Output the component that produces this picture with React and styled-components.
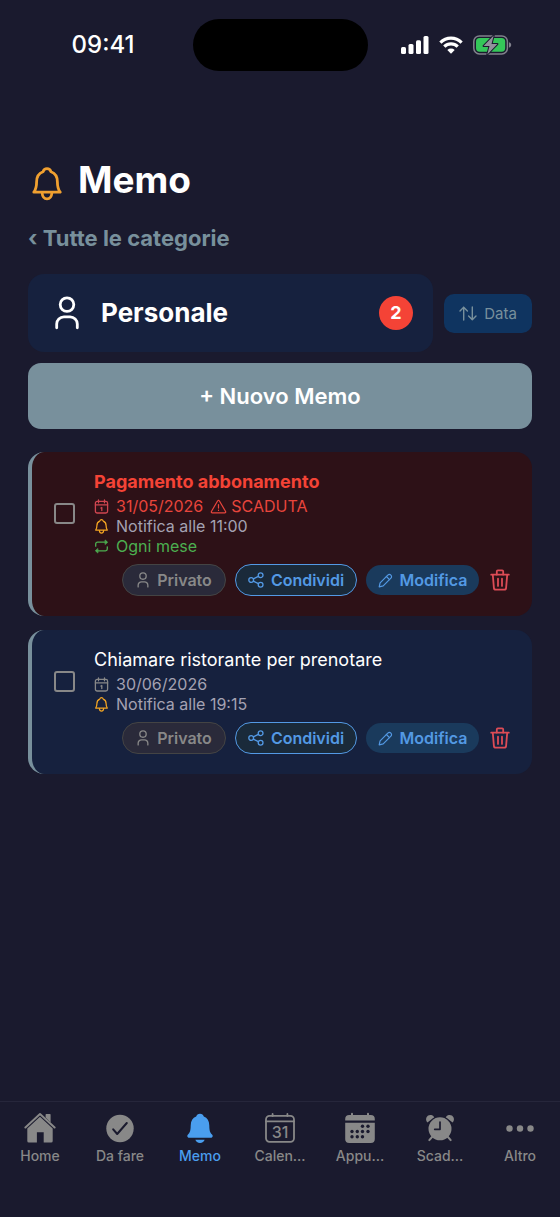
import React from "react";
import styled, { createGlobalStyle, css } from "styled-components";

const GlobalStyle = createGlobalStyle`
  *, *::before, *::after { box-sizing: border-box; }
  body {
    margin: 0;
    background: #1a1a2e;
    color: #fff;
    font-family: Inter, "Liberation Sans", sans-serif;
    -webkit-font-smoothing: antialiased;
  }
  button { font: inherit; border: 0; margin: 0; cursor: pointer; }
  svg { display: block; flex: none; }
`;

/* ---------- icons ---------- */

const Line = ({ w, h, box, stroke = 2, children }) => (
  <svg
    width={w}
    height={h}
    viewBox={box}
    fill="none"
    stroke="currentColor"
    strokeWidth={stroke}
    strokeLinecap="round"
    strokeLinejoin="round"
    aria-hidden="true"
  >
    {children}
  </svg>
);

const BellIcon = ({ w, h }) => (
  <Line w={w} h={h} box="0 0 30 34" stroke={2.8}>
    <path d="M1.800 25.200C3.800 22.600 4.600 20 4.600 15C4.600 9.600 7 6.200 11 4.800C11.600 2.800 13 1.600 15 1.600s3.400 1.200 4 3.200C23 6.200 25.400 9.600 25.400 15C25.400 20 26.200 22.600 28.200 25.200Z" />
    <path d="M10.200 26.500C10.500 30 12.200 31.800 15 31.800s4.500-1.800 4.800-5.300" />
  </Line>
);

const PersonIcon = ({ w, h }) => (
  <Line w={w} h={h} box="0 0 24 34" stroke={2.8}>
    <circle cx="12" cy="8.600" r="6.800" />
    <path d="M1.700 31.800V28a7.200 7.200 0 0 1 7.200-7.200h6.200a7.200 7.200 0 0 1 7.200 7.200v3.800" />
  </Line>
);

const SortIcon = () => (
  <Line w={18} h={15} box="0 0 18 15" stroke={1.4}>
    <path d="M4.700 14V1.200M1 5l3.700-3.800L8.400 5" />
    <path d="M13.300 1v12.800M9.600 10l3.700 3.800L17 10" />
  </Line>
);

const CalendarSmallIcon = () => (
  <Line w={15} h={15} box="0 0 15 15" stroke={1.3}>
    <rect x="1.400" y="2.400" width="12.200" height="11.600" rx="1.800" />
    <path d="M1.400 5.900h12.200M4.500 1v2.800M10.500 1v2.800M6.900 9l.9-.5v3" />
  </Line>
);

const WarningIcon = () => (
  <Line w={17} h={15} box="0 0 17 15" stroke={1.2}>
    <path d="M7.700 1.800a.9.900 0 0 1 1.600 0l6.300 10.700a.9.900 0 0 1-.8 1.300H2.200a.9.900 0 0 1-.8-1.300z" />
    <path d="M8.500 5.500v3.600M8.500 11.200v.2" />
  </Line>
);

const RepeatIcon = () => (
  <Line w={15} h={15} box="0 0 15 15" stroke={1.3}>
    <path d="M1.700 7.200V5a1.800 1.800 0 0 1 1.800-1.800h9" />
    <path d="M13.300 7.800V10a1.800 1.800 0 0 1-1.800 1.800h-9" />
    <path d="M11.400 1.200l2.200 2-2.200 2zM3.600 9.800l-2.200 2 2.200 2z" fill="currentColor" strokeWidth="0.8" />
  </Line>
);

const ShareIcon = () => (
  <Line w={16} h={16} box="0 0 16 16" stroke={1.3}>
    <circle cx="3.200" cy="8" r="2.400" />
    <circle cx="12.600" cy="3.200" r="2.400" />
    <circle cx="12.600" cy="12.800" r="2.400" />
    <path d="M5.400 6.900l5-2.600M5.400 9.100l5 2.600" />
  </Line>
);

const PencilIcon = () => (
  <Line w={15} h={15} box="0 0 15 15" stroke={1.2}>
    <path d="M1.200 13.800l.9-4L9.800 2.100a2.100 2.100 0 0 1 3.100 3.100L5.200 12.900z" />
    <path d="M8.400 3.500l3.100 3.100" />
  </Line>
);

const TrashIcon = () => (
  <Line w={20} h={22} box="0 0 20 22" stroke={1.8}>
    <path d="M1.200 5.700h17.600" />
    <path d="M6.800 5.500V2.400a1 1 0 0 1 1-1h4.400a1 1 0 0 1 1 1v3.100" />
    <path d="M2.800 5.900l1.100 13a1.900 1.900 0 0 0 1.900 1.800h8.400a1.900 1.900 0 0 0 1.900-1.800l1.100-13" />
    <path d="M8 9.700v7.200M12 9.700v7.200" />
  </Line>
);

const HomeIcon = () => (
  <svg width="32" height="32" viewBox="0 0 32 32" fill="currentColor" aria-hidden="true">
    <path d="M1.400 15.500L16 2l14.600 13.500" fill="none" stroke="currentColor" strokeWidth="2" strokeLinecap="round" strokeLinejoin="round" />
    <path d="M21.600 5.600V2.600a.7.700 0 0 1 .7-.7h3.600a.7.700 0 0 1 .7.700v7.800z" />
    <path d="M16 4.700L28.700 16.500V29a1.600 1.600 0 0 1-1.600 1.600h-7.400V20.200h-6.800v10.400H4.900A1.600 1.600 0 0 1 3.300 29V16.500z" />
  </svg>
);

const DoneIcon = () => (
  <svg width="32" height="32" viewBox="0 0 32 32" aria-hidden="true">
    <circle cx="16" cy="16.500" r="13.700" fill="currentColor" />
    <path d="M9.200 17.300l4 4.700 9.600-11" fill="none" stroke="#1a1a2e" strokeWidth="2" strokeLinecap="round" strokeLinejoin="round" />
  </svg>
);

const BellSolidIcon = () => (
  <svg width="32" height="32" viewBox="0 0 32 32" fill="currentColor" aria-hidden="true">
    <path d="M16 1.700c-2 0-3.400 1.200-3.800 2.900C8.600 6 6.800 9.100 6.700 13.500c-.1 5-.6 7-2.700 9-.6.600-.7 1.100-.7 1.500 0 1.200.9 1.800 2 1.800h21.400c1.100 0 2-.6 2-1.800 0-.4-.1-.9-.7-1.500-2.100-2-2.600-4-2.700-9-.1-4.400-1.900-7.500-5.500-8.900C19.400 2.900 18 1.700 16 1.700z" />
    <path d="M11.400 27.800h9.200c-.5 1.900-2.300 3.200-4.600 3.200s-4.100-1.300-4.600-3.200z" />
  </svg>
);

const CalendarDayIcon = () => (
  <svg width="32" height="32" viewBox="0 0 32 32" aria-hidden="true">
    <g fill="none" stroke="currentColor" strokeWidth="1.800" strokeLinecap="round">
      <rect x="2" y="3.900" width="28" height="26" rx="3.600" />
      <path d="M2 9.300h28M8.600 2v2M23.400 2v2" />
    </g>
    <text x="16" y="25.500" textAnchor="middle" fontSize="16" fontWeight="500" fill="currentColor">31</text>
  </svg>
);

const DOTS = [[18.500, 14.300], [24, 14.300], [8, 19.500], [13.300, 19.500], [18.500, 19.500], [24, 19.500], [8, 24.700], [13.300, 24.700], [18.500, 24.700]];

const CalendarSolidIcon = () => (
  <svg width="32" height="32" viewBox="0 0 32 32" aria-hidden="true">
    <g fill="currentColor">
      <path d="M1.200 8.600V7a4 4 0 0 1 4-4h21.600a4 4 0 0 1 4 4v1.600z" />
      <path d="M1.200 10.700h29.600V27a4 4 0 0 1-4 4H5.200a4 4 0 0 1-4-4z" />
      <path d="M8 1.800v2M24 1.800v2" stroke="currentColor" strokeWidth="2" strokeLinecap="round" />
    </g>
    {DOTS.map(([x, y]) => (
      <circle key={`${x}-${y}`} cx={x} cy={y} r="1.700" fill="#1a1a2e" />
    ))}
  </svg>
);

const AlarmIcon = () => (
  <svg width="32" height="32" viewBox="0 0 32 32" aria-hidden="true">
    <g fill="currentColor">
      <path d="M3.400 10.500A4.400 4.400 0 1 1 10.300 5.200z" />
      <path d="M28.600 10.500a4.400 4.400 0 1 0-6.900-5.300z" />
      <circle cx="16" cy="16.800" r="12.400" fill="#1a1a2e" />
      <path d="M8.500 24.500l-3.200 3.600M23.500 24.500l3.200 3.600" stroke="currentColor" strokeWidth="2" strokeLinecap="round" />
      <circle cx="16" cy="16.800" r="11.500" />
    </g>
    <path d="M16 10v7.300h-5.300" fill="none" stroke="#1a1a2e" strokeWidth="1.700" strokeLinecap="round" strokeLinejoin="round" />
  </svg>
);

const MoreIcon = () => (
  <svg width="32" height="32" viewBox="0 0 32 32" fill="currentColor" aria-hidden="true">
    <circle cx="5.500" cy="16.500" r="3.200" />
    <circle cx="16" cy="16.500" r="3.200" />
    <circle cx="26.500" cy="16.500" r="3.200" />
  </svg>
);

const SignalIcon = () => (
  <svg width="28" height="18" viewBox="0 0 28 18" fill="#fff" aria-hidden="true">
    <rect x="0" y="11" width="5" height="7" rx="1.500" />
    <rect x="7.500" y="8" width="5" height="10" rx="1.500" />
    <rect x="15" y="4.300" width="5" height="13.700" rx="1.500" />
    <rect x="22.500" y="0" width="5" height="18" rx="1.500" />
  </svg>
);

const WifiIcon = () => (
  <svg width="24" height="18" viewBox="0 0 24 18" aria-hidden="true">
    <g fill="none" stroke="#fff" strokeWidth="3.200">
      <path d="M1.400 6.600a15 15 0 0 1 21.200 0" />
      <path d="M5.300 10.700a9.500 9.500 0 0 1 13.400 0" />
    </g>
    <path d="M12 17.800l-3.700-3.900a5.400 5.400 0 0 1 7.400 0z" fill="#fff" />
  </svg>
);

const BatteryIcon = () => (
  <svg width="39" height="20" viewBox="0 0 39 20" aria-hidden="true">
    <rect x="0.800" y="0.900" width="33.600" height="18" rx="5.600" fill="none" stroke="#81818c" strokeWidth="1.500" />
    <rect x="3" y="3.100" width="29.200" height="13.600" rx="3.600" fill="#34c759" />
    <path d="M36 7.200c1.500.5 2.200 1.500 2.200 2.700s-.7 2.200-2.200 2.700z" fill="#81818c" />
    <path d="M20.700 0.600L10.600 11h5.900l-2.200 8.400L24.400 9h-5.900z" fill="#92929c" stroke="#1a1a2e" strokeWidth="2" strokeLinejoin="round" paintOrder="stroke" />
  </svg>
);

/* ---------- layout ---------- */

const Screen = styled.div`
  min-height: 100vh;
  display: flex;
  flex-direction: column;
`;

const StatusBar = styled.header`
  display: grid;
  grid-template-columns: 1fr 175px 1fr;
  align-items: center;
  padding-top: 19px;
`;

const Clock = styled.time`
  padding-right: 58px;
  text-align: right;
  font-size: 24px;
  line-height: 28px;
  font-weight: 500;
`;

const Island = styled.div`
  height: 52px;
  border-radius: 26px;
  background: #000;
`;

const StatusIcons = styled.div`
  display: flex;
  align-items: center;
  gap: 10px;
  padding-left: 33px;
`;

const Main = styled.main`
  flex: 1;
  display: flex;
  flex-direction: column;
  padding: 85px 28px 40px;
`;

const Heading = styled.h1`
  display: flex;
  align-items: center;
  gap: 16px;
  margin: 0;
  padding-left: 4px;
  font-size: 37px;
  line-height: 48px;
  font-weight: 700;

  svg { color: #f0a030; margin-top: 8px; }
`;

const BackLink = styled.a`
  align-self: flex-start;
  margin-top: 18px;
  color: #78909c;
  font-size: 22px;
  line-height: 32px;
  font-weight: 700;
  text-decoration: none;
`;

const CategoryRow = styled.div`
  display: flex;
  align-items: center;
  gap: 11px;
  margin-top: 20px;
`;

const CategoryCard = styled.section`
  flex: 1;
  display: flex;
  align-items: center;
  gap: 22px;
  height: 78px;
  padding: 0 20px 0 27px;
  border-radius: 16px;
  background: #16213e;
`;

const CategoryName = styled.h2`
  flex: 1;
  margin: 0;
  font-size: 26px;
  line-height: 32px;
  font-weight: 700;
`;

const CountBadge = styled.span`
  width: 34px;
  height: 34px;
  border-radius: 50%;
  background: #f44336;
  font-size: 18px;
  line-height: 34px;
  font-weight: 700;
  text-align: center;
`;

const SortButton = styled.button`
  display: flex;
  align-items: center;
  justify-content: center;
  gap: 7px;
  width: 88px;
  height: 39px;
  padding: 0;
  border-radius: 10px;
  background: #0f3460;
  color: #78909c;
  font-size: 15px;
`;

const NewButton = styled.button`
  height: 66px;
  margin-top: 11px;
  border-radius: 13px;
  background: #78909c;
  color: #fff;
  font-size: 22px;
  font-weight: 600;
`;

const MemoList = styled.ul`
  display: flex;
  flex-direction: column;
  gap: 14px;
  margin: 23px 0 0;
  padding: 0;
  list-style: none;
`;

const MemoCard = styled.li`
  display: flex;
  flex-direction: column;
  gap: 8px;
  padding: 18px 22px 20px;
  border-left: 4px solid #78909c;
  border-radius: 16px;
  background: ${(p) => (p.$overdue ? "#2d1117" : "#16213e")};
`;

const MemoTop = styled.div`
  display: flex;
  align-items: center;
  gap: 19px;
`;

const CheckBox = styled.input`
  appearance: none;
  flex: none;
  width: 21px;
  height: 21px;
  margin: 0;
  border: 2px solid #888;
  border-radius: 3px;
  &:checked { background: #888; }
`;

const MemoTitle = styled.label`
  display: block;
  margin-bottom: 2px;
  font-size: 18px;
  line-height: 24px;
  ${(p) => p.$overdue && css`
    color: #f44336;
    font-weight: 700;
  `}
`;

const TONES = { muted: "#a4a2b2", danger: "#e8453c", success: "#4caf50" };
const ICON_TONES = { muted: "#888", danger: "#cf4650", success: "#4caf50", bell: "#f5a623" };

const Detail = styled.div`
  display: flex;
  align-items: center;
  gap: 7px;
  color: ${(p) => TONES[p.$tone]};
  font-size: 16px;
  line-height: 20px;
`;

const Glyph = styled.span`
  display: flex;
  color: ${(p) => ICON_TONES[p.$tone]};
`;

const Flag = styled.span`
  display: flex;
  align-items: center;
  gap: 4px;
`;

const Actions = styled.div`
  display: flex;
  align-items: center;
  justify-content: flex-end;
  gap: 9px;
`;

const VARIANTS = {
  private: css`
    width: 104px;
    height: 32px;
    border: 1px solid #444;
    background: #2a2a3a;
    color: #888;
  `,
  share: css`
    width: 122px;
    height: 32px;
    border: 1px solid #5399e4;
    background: #1a2a3a;
    color: #5399e4;
  `,
  edit: css`
    width: 113px;
    height: 30px;
    background: #1a3a5c;
    color: #5399e4;
  `,
};

const Pill = styled.button`
  display: flex;
  align-items: center;
  justify-content: center;
  gap: 7px;
  padding: 0;
  border-radius: 16px;
  font-size: 16px;
  font-weight: 600;
  ${(p) => VARIANTS[p.$variant]}
`;

const DeleteButton = styled.button`
  margin-left: 2px;
  padding: 0;
  background: none;
  color: #dd4c56;
`;

const TabBar = styled.nav`
  display: grid;
  grid-template-columns: repeat(7, 1fr);
  padding: 10px 0 51px;
  border-top: 1px solid #26263b;
`;

const Tab = styled.a`
  display: flex;
  flex-direction: column;
  align-items: center;
  gap: 2px;
  color: ${(p) => (p.$active ? "#4a9eef" : "#888")};
  font-size: 14px;
  line-height: 20px;
  font-weight: 500;
  text-decoration: none;
`;

const MEMOS = [
  { id: "abbonamento", title: "Pagamento abbonamento", date: "31/05/2026", overdue: true, notify: "Notifica alle 11:00", repeat: "Ogni mese" },
  { id: "ristorante", title: "Chiamare ristorante per prenotare", date: "30/06/2026", notify: "Notifica alle 19:15" },
];

const TABS = [
  { label: "Home", Icon: HomeIcon },
  { label: "Da fare", Icon: DoneIcon },
  { label: "Memo", Icon: BellSolidIcon, active: true },
  { label: "Calen...", Icon: CalendarDayIcon },
  { label: "Appu...", Icon: CalendarSolidIcon },
  { label: "Scad...", Icon: AlarmIcon },
  { label: "Altro", Icon: MoreIcon },
];

function Memo({ memo }) {
  const dateTone = memo.overdue ? "danger" : "muted";
  return (
    <MemoCard $overdue={memo.overdue}>
      <MemoTop>
        <CheckBox type="checkbox" id={memo.id} />
        <div>
          <MemoTitle htmlFor={memo.id} $overdue={memo.overdue}>{memo.title}</MemoTitle>
          <Detail $tone={dateTone}>
            <Glyph $tone={dateTone}><CalendarSmallIcon /></Glyph>
            {memo.date}
            {memo.overdue && <Flag><WarningIcon />SCADUTA</Flag>}
          </Detail>
          <Detail $tone="muted">
            <Glyph $tone="bell"><BellIcon w={15} h={15} /></Glyph>
            {memo.notify}
          </Detail>
          {memo.repeat && (
            <Detail $tone="success">
              <Glyph $tone="success"><RepeatIcon /></Glyph>
              {memo.repeat}
            </Detail>
          )}
        </div>
      </MemoTop>
      <Actions>
        <Pill type="button" $variant="private"><PersonIcon w={14} h={16} />Privato</Pill>
        <Pill type="button" $variant="share"><ShareIcon />Condividi</Pill>
        <Pill type="button" $variant="edit"><PencilIcon />Modifica</Pill>
        <DeleteButton type="button" aria-label="Elimina"><TrashIcon /></DeleteButton>
      </Actions>
    </MemoCard>
  );
}

export default function App() {
  return (
    <Screen>
      <GlobalStyle />
      <StatusBar>
        <Clock>09:41</Clock>
        <Island />
        <StatusIcons>
          <SignalIcon />
          <WifiIcon />
          <BatteryIcon />
        </StatusIcons>
      </StatusBar>
      <Main>
        <Heading><BellIcon w={30} h={34} />Memo</Heading>
        <BackLink href="#categorie">‹ Tutte le categorie</BackLink>
        <CategoryRow>
          <CategoryCard>
            <PersonIcon w={24} h={34} />
            <CategoryName>Personale</CategoryName>
            <CountBadge>2</CountBadge>
          </CategoryCard>
          <SortButton type="button"><SortIcon />Data</SortButton>
        </CategoryRow>
        <NewButton type="button">+ Nuovo Memo</NewButton>
        <MemoList>
          {MEMOS.map((memo) => <Memo key={memo.id} memo={memo} />)}
        </MemoList>
      </Main>
      <TabBar>
        {TABS.map(({ label, Icon, active }) => (
          <Tab key={label} href={`#${label}`} $active={active} aria-current={active ? "page" : undefined}>
            <Icon />
            {label}
          </Tab>
        ))}
      </TabBar>
    </Screen>
  );
}
